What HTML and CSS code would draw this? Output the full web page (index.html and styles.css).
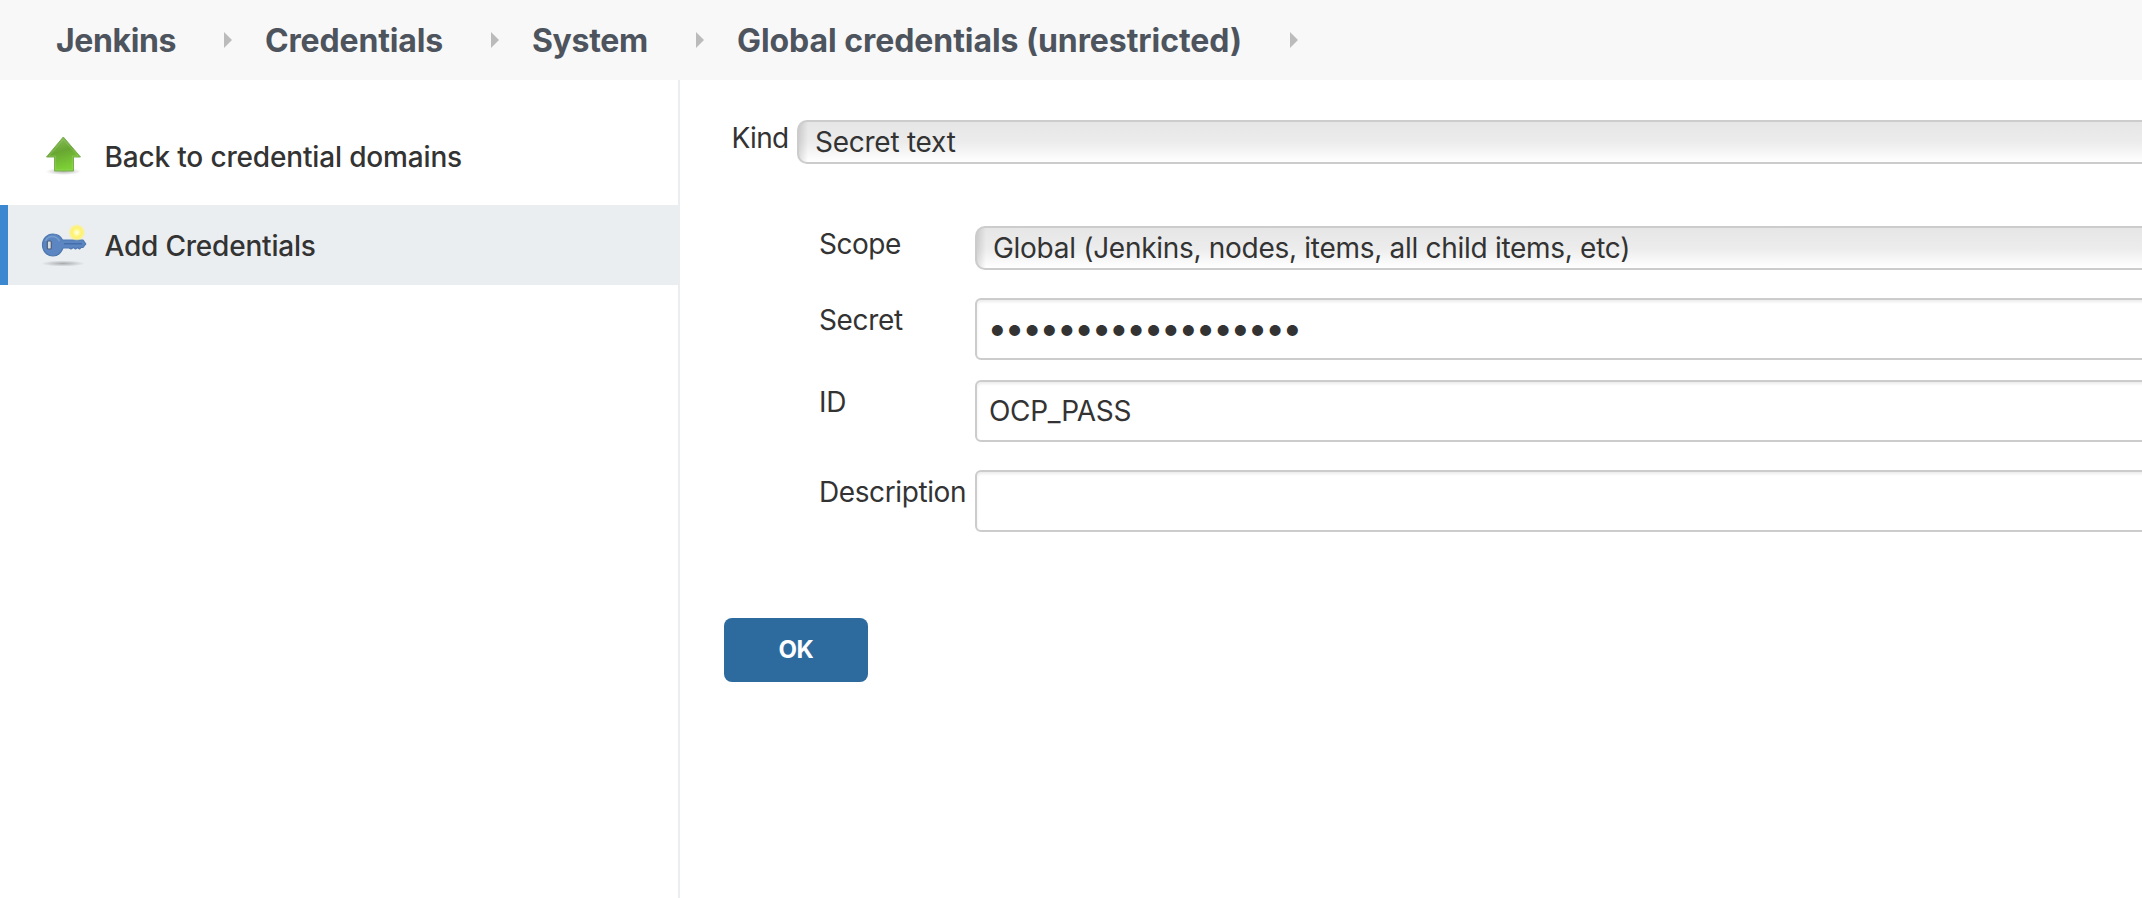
FILE: index.html
```html
<!DOCTYPE html>
<html lang="en">
<head>
<meta charset="utf-8">
<title>Jenkins</title>
<link rel="stylesheet" href="styles.css">
</head>
<body>
<nav class="breadcrumbs">
  <a class="crumb crumb-jenkins">Jenkins</a><i class="sep"></i>
  <a class="crumb crumb-credentials">Credentials</a><i class="sep"></i>
  <a class="crumb crumb-system">System</a><i class="sep"></i>
  <a class="crumb crumb-domain">Global credentials (unrestricted)</a><i class="sep"></i>
</nav>
<div class="page">
  <aside class="sidebar">
    <a class="task">
      <svg class="icon" width="48" height="48" viewBox="0 0 48 48">
        <defs>
          <linearGradient id="leaf" x1="0" y1="0" x2="0.3" y2="1"><stop offset="0" stop-color="#8fc060"/><stop offset=".5" stop-color="#68a632"/><stop offset="1" stop-color="#7cd035"/></linearGradient>
          <radialGradient id="shade"><stop offset="0" stop-color="#000" stop-opacity=".28"/><stop offset="1" stop-color="#000" stop-opacity="0"/></radialGradient>
        </defs>
        <ellipse cx="23.500" cy="38.500" rx="18" ry="3.500" fill="url(#shade)"/>
        <path d="M23.300 4 L40.500 24 H33.500 V38 H14.500 V24 H6.500 Z" fill="url(#leaf)" stroke="#7aae50" stroke-width="1" stroke-linejoin="round"/>
        <path d="M23.300 6.500 L38 23 H32.300 V36.800 H15.700 V23 H9 Z" fill="none" stroke="#b4df8c" stroke-opacity=".3"/>
      </svg>
      <span class="task-back">Back to credential domains</span>
    </a>
    <a class="task active">
      <svg class="icon" width="48" height="48" viewBox="0 0 48 48">
        <defs><radialGradient id="glow"><stop offset="0" stop-color="#ffffe8"/><stop offset=".25" stop-color="#fffbb0"/><stop offset=".55" stop-color="#fff268"/><stop offset=".8" stop-color="#fff27a" stop-opacity=".75"/><stop offset="1" stop-color="#fff27a" stop-opacity="0"/></radialGradient></defs>
        <ellipse cx="23" cy="42.500" rx="22" ry="3" fill="url(#shade)"/>
        <path d="M13 13 C18 13 21 16 22.500 19 H43 L45.800 23 L43 26.500 H41 L39.500 28 L37.500 26.500 L35.500 28 L33.500 26.500 L31 28 L29 27 H23 C21 32 18 35 13 35 C7 35 2.500 30 2.500 24 S7 13 13 13 Z" fill="#5b86c2" stroke="#4f78b1" stroke-width="1.200" stroke-linejoin="round"/>
        <path d="M24 22.800 H42" stroke="#416ca6" stroke-width="1.300"/>
        <path d="M5.500 20 C8 14 16 14 19.500 20" fill="none" stroke="#779dce" stroke-width="1.500"/>
        <rect x="7.300" y="20" width="4" height="8" rx="1" fill="#d6dbe0" stroke="#4c5f7c" stroke-width="1.200"/>
        <circle cx="36.800" cy="11.500" r="8.500" fill="url(#glow)"/>
      </svg>
      <span class="task-add">Add Credentials</span>
    </a>
  </aside>
  <main class="content">
    <div class="kind-row">
      <label class="label kind-label">Kind</label>
      <div class="select"><span class="kind-value">Secret text</span></div>
    </div>
    <div class="fields">
      <div class="row scope"><label class="label l-scope">Scope</label><div class="select"><span class="scope-value">Global (Jenkins, nodes, items, all child items, etc)</span></div></div>
      <div class="row secret"><label class="label l-secret">Secret</label><input class="input password" type="password" value="abcdefghijklmnopqr"></div>
      <div class="row id"><label class="label l-id">ID</label><input class="input id-value" type="text" value="OCP_PASS"></div>
      <div class="row description"><label class="label l-desc">Description</label><input class="input" type="text"></div>
    </div>
    <button class="ok" type="button">OK</button>
  </main>
</div>
</body>
</html>
```
FILE: styles.css
```css
* { box-sizing: border-box; }
body { margin: 0; height: 898px; overflow: hidden; display: flex; flex-direction: column; background: #fff; color: #333; font: 28px/40px Inter, "Liberation Sans", sans-serif; }
.breadcrumbs { display: flex; align-items: center; height: 80px; flex: none; padding-left: 56px; background: #f8f8f8; color: #4d545d; font-size: 32px; font-weight: 700; white-space: nowrap; }
.sep { width: 8px; height: 16px; flex: none; margin: 0 33px 0 48px; background: #bbb; clip-path: polygon(0 0, 100% 50%, 0 100%); }
.crumb { flex: none; padding-top: 2px; letter-spacing: -0.4px; }
.crumb-credentials { letter-spacing: -0.155px; }
.crumb-system { letter-spacing: -0.3px; }
.crumb-domain { letter-spacing: -0.06px; }
.page { display: flex; flex: 1; }
.sidebar { width: 680px; flex: none; padding-top: 37px; border-right: 2px solid #eaeef1; }
.task { display: flex; align-items: center; height: 80px; padding-left: 40px; font-weight: 500; white-space: nowrap; margin-bottom: 8px; }
.task .icon { margin-right: 16.5px; flex: none; }
.task-back { letter-spacing: -0.16px; }
.task-add { letter-spacing: -0.2px; padding-top: 2px; }
.active { background: #eaeef1; border-left: 8px solid #3b88d0; padding-left: 32px; }
.content { flex: 1; min-width: 0; padding-top: 40px; overflow: hidden; }
.kind-row { display: flex; height: 44px; padding-left: 51.5px; }
.label { white-space: nowrap; flex: none; line-height: 36px; }
.kind-label { width: 65.5px; letter-spacing: -0.7px; }
.l-scope { letter-spacing: -0.5px; }
.l-secret, .l-id { letter-spacing: -0.35px; }
.l-desc { letter-spacing: -0.4px; }
.select { flex: 1; height: 44px; border: 2px solid #ccc; border-right: 0; border-radius: 10px 0 0 10px; background: linear-gradient(90deg, rgba(0,0,0,.12), transparent 9px), linear-gradient(#e6e6e6, #ececec 50%, #fff); padding-left: 16px; line-height: 41px; white-space: nowrap; }
.kind-value { letter-spacing: -0.25px; }
.scope-value { letter-spacing: -0.29px; }
.fields { padding: 62px 0 0 139px; }
.row { display: flex; }
.row .label { width: 156px; }
.input { flex: 1; min-width: 0; height: 62px; margin-right: -10px; border: 2px solid #ccc; border-radius: 6px; box-shadow: inset 0 2px 3px rgba(0,0,0,.08); padding: 0 0 0 12px; font: inherit; color: #333; background: #fff; outline: 0; }
.password { font-size: 35px; letter-spacing: -2.33px; padding: 0 0 2px 10.5px; }
.id-value { letter-spacing: -0.3px; }
.scope { height: 72px; }
.secret { height: 82px; }
.id { height: 90px; }
.secret .label, .id .label, .description .label { line-height: 44px; }
.ok { display: block; width: 144px; height: 64px; margin: 86px 0 0 44px; border: 0; border-radius: 8px; background: #2d6b9e; color: #fff; font: 700 24px/62px Inter, sans-serif; letter-spacing: -0.5px; padding: 0; }
```
